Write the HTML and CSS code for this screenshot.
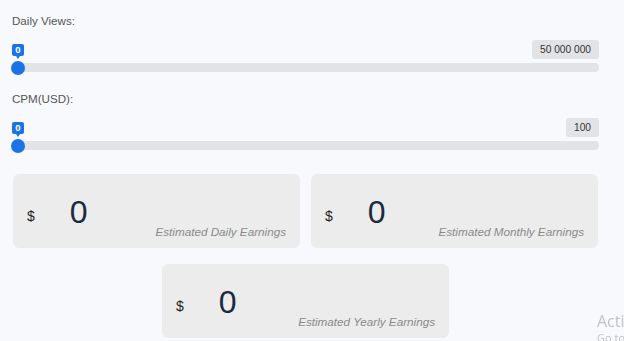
FILE: index.html
```html
<!DOCTYPE html>
<html lang="en">
<head>
<meta charset="utf-8">
<title>Earnings Calculator</title>
<link rel="stylesheet" href="styles.css">
</head>
<body>
<main class="calc">
  <section class="field">
    <div class="field-label">Daily Views:</div>
    <div class="slider">
      <div class="slider-top">
        <span class="bubble">0</span>
        <span class="max">50 000 000</span>
      </div>
      <div class="track"><span class="thumb"></span></div>
    </div>
  </section>
  <section class="field">
    <div class="field-label">CPM(USD):</div>
    <div class="slider">
      <div class="slider-top">
        <span class="bubble">0</span>
        <span class="max">100</span>
      </div>
      <div class="track"><span class="thumb"></span></div>
    </div>
  </section>
  <section class="cards">
    <div class="card">
      <span class="cur">$</span>
      <span class="num">0</span>
      <span class="label">Estimated Daily Earnings</span>
    </div>
    <div class="card">
      <span class="cur">$</span>
      <span class="num">0</span>
      <span class="label">Estimated Monthly Earnings</span>
    </div>
    <div class="card">
      <span class="cur">$</span>
      <span class="num">0</span>
      <span class="label">Estimated Yearly Earnings</span>
    </div>
  </section>
</main>
<div class="watermark">
  <div class="wm-title">Activate Windows</div>
  <div class="wm-sub">Go to Settings to activate Windows.</div>
</div>
</body>
</html>
```
FILE: styles.css
```css
html, body {
  margin: 0;
  padding: 0;
  overflow: hidden;
}
body {
  background: #f8f9fc;
  font-family: "Liberation Sans", Arial, sans-serif;
  height: 341px;
}
.calc {
  width: 587px;
  margin-left: 12px;
  padding-top: 14px;
}
.field {
  margin-bottom: 20px;
}
.field + .field {
  margin-bottom: 24px;
}
.field-label {
  font-size: 11.6px;
  line-height: 14px;
  color: #555;
  margin-bottom: 12px;
}
.slider-top {
  display: flex;
  justify-content: space-between;
  align-items: flex-end;
  height: 19px;
  margin-bottom: 4px;
}
.bubble {
  position: relative;
  display: block;
  width: 12px;
  height: 12px;
  line-height: 12px;
  margin-bottom: 3px;
  background: #1b73e6;
  color: #fff;
  border-radius: 2px;
  font-size: 9.5px;
  font-weight: bold;
  text-align: center;
}
.bubble::after {
  content: "";
  position: absolute;
  left: 4px;
  top: 12px;
  border-left: 2px solid transparent;
  border-right: 2px solid transparent;
  border-top: 3px solid #1b73e6;
}
.max {
  display: block;
  height: 19px;
  line-height: 19px;
  padding: 0 8px;
  background: #e2e3e6;
  color: #333;
  border-radius: 3px;
  font-size: 10.2px;
}
.track {
  position: relative;
  height: 9px;
  background: #e1e3e7;
  border-radius: 4px;
}
.thumb {
  position: absolute;
  left: -1px;
  top: -2px;
  width: 14px;
  height: 14px;
  border-radius: 50%;
  background: #1b73e6;
}
.cards {
  display: flex;
  flex-wrap: wrap;
  justify-content: center;
  gap: 16px 11px;
}
.card {
  box-sizing: border-box;
  width: 287px;
  height: 74px;
  padding: 0 14px 9px 14px;
  background: #ececec;
  border-radius: 6px;
  display: flex;
  align-items: flex-end;
}
.cur {
  font-size: 14px;
  line-height: 14px;
  color: #222;
  margin-bottom: 16px;
}
.num {
  font-size: 32px;
  line-height: 32px;
  color: #1c2a40;
  margin-left: 35px;
  margin-bottom: 11px;
}
.label {
  margin-left: auto;
  font-size: 11.7px;
  line-height: 14px;
  font-style: italic;
  color: #8a8a8a;
}
.watermark {
  position: fixed;
  left: 597px;
  top: 311px;
  white-space: nowrap;
  font-family: "Open Sans", "Noto Sans", sans-serif;
  color: #c2c3c6;
}
.wm-title {
  font-size: 16px;
  line-height: 20px;
}
.wm-sub {
  font-size: 11px;
  line-height: 14px;
}
```
